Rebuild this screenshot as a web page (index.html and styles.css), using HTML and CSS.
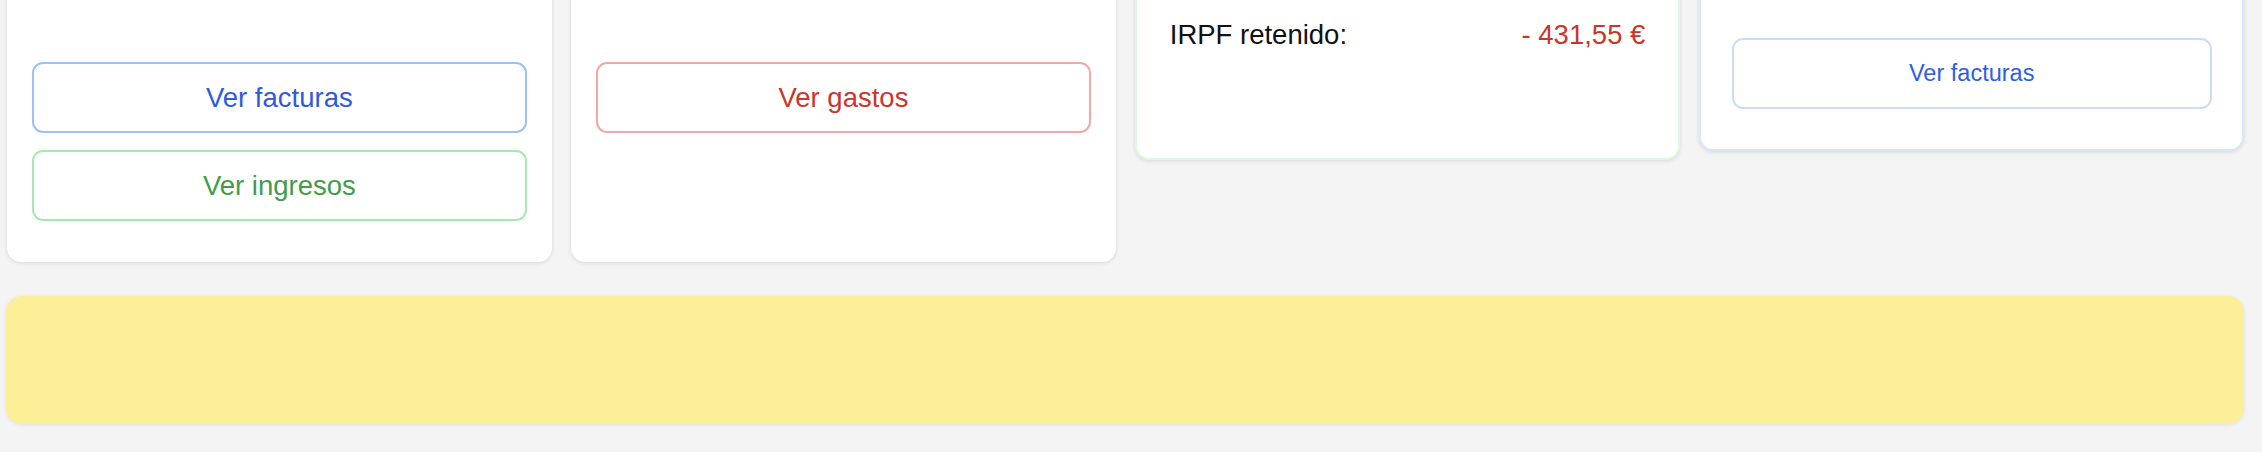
FILE: index.html
```html
<!DOCTYPE html>
<html lang="es">
<head>
<meta charset="utf-8">
<title>Resumen</title>
<link rel="stylesheet" href="styles.css">
</head>
<body>
<main class="page">
  <section class="cards">
    <div class="card card-tall">
      <div class="spacer spacer-1"></div>
      <div class="actions">
        <a class="btn btn-blue">Ver facturas</a>
        <a class="btn btn-green">Ver ingresos</a>
      </div>
    </div>
    <div class="card card-tall">
      <div class="spacer spacer-1"></div>
      <div class="actions">
        <a class="btn btn-red">Ver gastos</a>
      </div>
    </div>
    <div class="card card-green">
      <div class="spacer spacer-3"></div>
      <div class="row">
        <span class="row-label">IRPF retenido:</span>
        <span class="row-value neg">- 431,55 €</span>
      </div>
    </div>
    <div class="card card-blue">
      <div class="spacer spacer-4"></div>
      <a class="btn btn-blue-light">Ver facturas</a>
    </div>
  </section>
  <section class="notice"></section>
</main>
</body>
</html>
```

FILE: styles.css
```css
* { box-sizing: border-box; }
html, body {
  margin: 0;
  padding: 0;
  background: #f4f4f4;
  font-family: "Liberation Sans", Arial, Helvetica, sans-serif;
  overflow: hidden;
}
.page {
  padding: 0 18px 28px 6px;
}
.cards {
  display: grid;
  grid-template-columns: repeat(4, 1fr);
  column-gap: 19.5px;
  align-items: start;
  margin: -60px 0 0 1px;
}
.card {
  background: #ffffff;
  border-radius: 14px;
  box-shadow: 0 1px 4px rgba(0, 0, 0, 0.12);
  display: flex;
  flex-direction: column;
}
.card-tall {
  align-self: stretch;
  padding: 24px 25px 41px 25px;
}
.card-green {
  border: 2px solid #ddf8e3;
  padding: 31.5px 32.5px 107.5px 32.5px;
}
.card-blue {
  border: 2px solid #d8e7fb;
  padding: 30.5px 30.5px 39.5px 30.5px;
}
.spacer-1 { height: 98px; }
.spacer-3 { height: 45px; }
.spacer-4 { height: 65.8px; }
.actions {
  display: flex;
  flex-direction: column;
  gap: 17px;
}
.btn {
  display: flex;
  align-items: center;
  justify-content: center;
  height: 71px;
  border-radius: 11px;
  background: #ffffff;
  font-size: 27.5px;
  border: 2px solid;
  cursor: pointer;
}
.btn-blue { border-color: #9ec0f8; color: #2f5ae0; }
.btn-green { border-color: #a5e9b0; color: #419c4b; }
.btn-red { border-color: #f1a8a6; color: #cc352b; }
.btn-blue-light {
  border-color: #c9ddf9;
  color: #305de1;
  font-size: 23.5px;
}
.row {
  display: flex;
  justify-content: space-between;
  font-size: 27.5px;
  line-height: 32px;
  color: #111111;
}
.neg { color: #cc352b; }
.notice {
  margin-top: 34px;
  height: 128px;
  background: #fcef97;
  border-radius: 16px;
  box-shadow: 0 1px 4px rgba(0, 0, 0, 0.08);
}
```
